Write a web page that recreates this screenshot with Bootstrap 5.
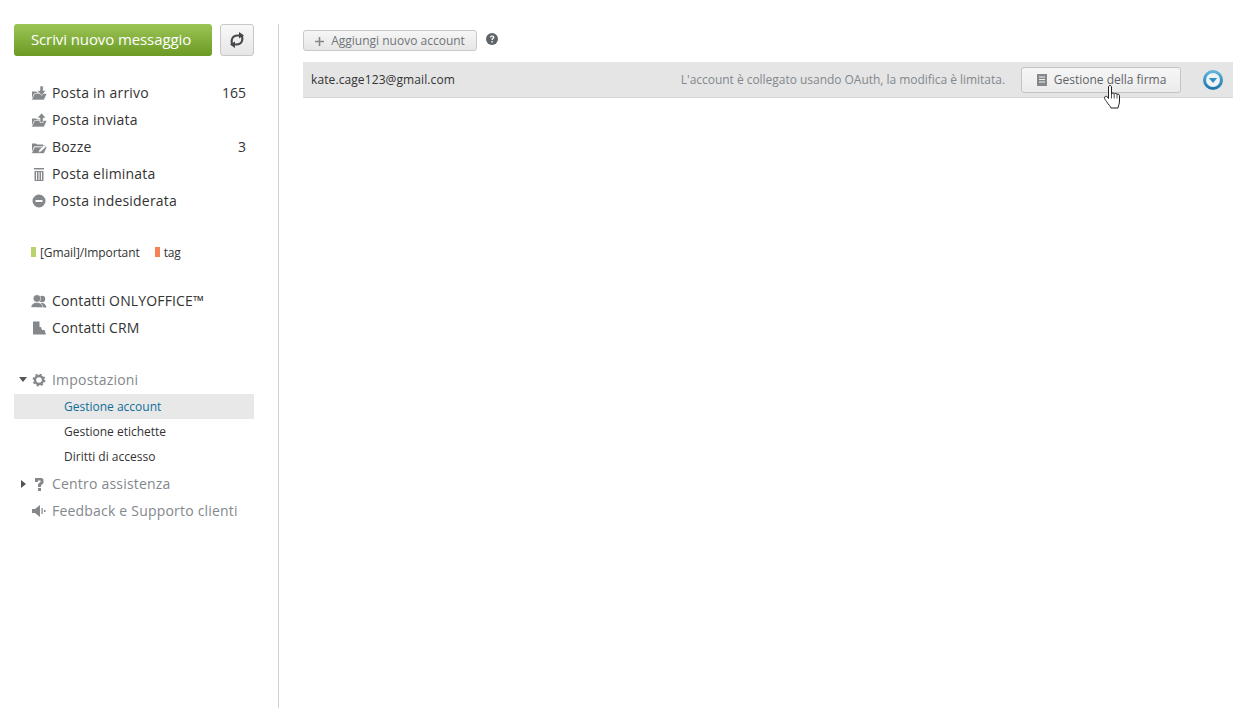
<!DOCTYPE html>
<html lang="it">
<head>
  <meta charset="UTF-8">
  <meta name="viewport" content="width=device-width, initial-scale=1.0">
  <title>Gestione account</title>
  <link href="https://cdn.jsdelivr.net/npm/bootstrap@5.3.0/dist/css/bootstrap.min.css" rel="stylesheet">
  <style>
    html, body { height: 100%; }
    body { background: #fff; font-family: "Open Sans", "Liberation Sans", sans-serif; color: #333; overflow: hidden; }
    .page-wrap { height: 708px; padding-left: 14px; padding-right: 7px; }
    .side-col { width: 240px; padding-top: 24px; flex: none; }
    .side-rule { width: 1px; background: #d1d1d1; margin-left: 24px; margin-right: 24px; margin-top: 24px; flex: none; }
    .main-col { flex: 1 1 auto; padding-top: 30px; min-width: 0; }
    .btn-compose { width: 198px; height: 32px; background: linear-gradient(#9cc557, #6b9a23); border: 0; border-radius: 3px; color: #fff; font-size: 15px; letter-spacing: -.1px; padding: 0 4px 2px 0; line-height: 30px; }
    .btn-compose:hover { color: #fff; }
    .btn-refresh { width: 34px; height: 32px; padding: 0; background: linear-gradient(#f8f8f8, #e6e6e6); border: 1px solid #c8c8c8; border-radius: 3px; }
    .menu-block { margin-top: 23px; }
    .menu-row { height: 27px; font-size: 14px; letter-spacing: .2px; color: #333; padding-left: 17px; padding-right: 8px; }
    .menu-row.is-tight { letter-spacing: .15px; }
    .menu-row svg { width: 16px; height: 14px; flex: none; margin-right: 5px; fill: #85888b; }
    .menu-row .menu-count { margin-left: auto; letter-spacing: 0; }
    .menu-row.is-muted { color: #83888d; }
    .menu-arrow { position: absolute; left: 5px; top: 11px; }
    .menu-arrow-wrap { position: relative; }
    .sub-list { margin-top: 1px; margin-bottom: 1px; }
    .sub-row { height: 25px; font-size: 12px; color: #333; padding-left: 50px; }
    .sub-row.is-on { background: #e8e8e8; color: #0f6f99; }
    .tag-row { margin-top: 25px; height: 27px; font-size: 12px; padding-left: 17px; gap: 15px; letter-spacing: -.1px; }
    .tag-mark { width: 5px; height: 10px; display: inline-block; margin-right: 4px; }
    .group-gap { margin-top: 25px; }
    .group-first { margin-top: 21px; }
    .btn-add { height: 21px; width: 174px; padding: 0; font-size: 12px; line-height: 19px; color: #6f7478; background: linear-gradient(#f6f6f6, #e6e6e6); border: 1px solid #c8c8c8; border-radius: 3px; }
    .help-dot { margin-left: 9px; margin-top: -3px; }
    .acct-row { height: 36px; margin-top: 11px; background: #e5e5e5; border-bottom: 1px solid #d6d6d6; padding-left: 8px; font-size: 12px; }
    .acct-mail { letter-spacing: .1px; }
    .acct-note { color: #83888d; margin-left: auto; margin-right: 16px; letter-spacing: -.03px; }
    .btn-sign { width: 160px; height: 26px; padding: 0 0 0 1px; font-size: 12px; color: #5f6468; background: linear-gradient(#f6f6f6, #ebebeb); border: 1px solid #c4c4c4; border-radius: 3px; position: relative; }
    .acct-menu { margin-left: 22px; margin-right: 10px; }
    .hand-cursor { position: absolute; left: 82px; top: 17px; }
  </style>
</head>
<body>
  <div class="page-wrap d-flex">
    <!-- sidebar -->
    <div class="side-col">
      <div class="d-flex gap-2">
        <button class="btn btn-compose" type="button">Scrivi nuovo messaggio</button>
        <button class="btn btn-refresh d-flex align-items-center justify-content-center" type="button">
          <svg width="16" height="16" viewBox="0 0 16 16" fill="none" stroke="#45484b" stroke-width="2">
            <path d="M4 13.500 C1 9 3 3.500 8.500 3.500 L10.500 3.500"/><path d="M12 2.500 C15 7 13 12.500 7.500 12.500 L5.500 12.500"/>
            <path d="M10 0 L15 3.500 L10 6.500Z" fill="#45484b" stroke="none"/><path d="M6 9.500 L1 12.500 L6 16Z" fill="#45484b" stroke="none"/>
          </svg>
        </button>
      </div>

      <div class="menu-block">
        <div class="menu-row d-flex align-items-center">
          <svg viewBox="0 0 16 14"><path d="M1 13V5.500h4L6 6.500h3V8H3z"/><path d="M3.500 7.500H16L13 14H.5z" stroke="#fff" stroke-width=".6"/><path d="M9 0h3.200v4.500H15L10.600 9.500 6.200 4.500H9z" stroke="#fff" stroke-width=".6"/></svg>
          <span>Posta in arrivo</span><span class="menu-count">165</span>
        </div>
        <div class="menu-row d-flex align-items-center">
          <svg viewBox="0 0 16 14"><path d="M1 13V5.500h4L6 6.500h3V8H3z"/><path d="M3.500 7.500H16L13 14H.5z" stroke="#fff" stroke-width=".6"/><path d="M9 9.500h3.200V5H15L10.600 0 6.200 5H9z" stroke="#fff" stroke-width=".6"/></svg>
          <span>Posta inviata</span>
        </div>
        <div class="menu-row d-flex align-items-center">
          <svg viewBox="0 0 16 14"><path d="M1 12.500V3.500h4L6 4.500h6V6.500H3z"/><path d="M3.500 7H16L13 13.500H.5z" stroke="#fff" stroke-width=".6"/><path d="M7.500 12.500l.6-2.500 5-5 1.800 1.800-5 5z" stroke="#85888b" stroke-width=".5" fill="#fff"/></svg>
          <span>Bozze</span><span class="menu-count">3</span>
        </div>
        <div class="menu-row d-flex align-items-center">
          <svg viewBox="0 0 16 14"><path d="M3 1h10v1.500H3z"/><path d="M3.500 4h9v10h-9zM5 5v8h1V5zM7.500 5v8h1V5zM10 5v8h1V5z" fill-rule="evenodd"/></svg>
          <span>Posta eliminata</span>
        </div>
        <div class="menu-row d-flex align-items-center">
          <svg viewBox="0 0 16 14"><path d="M8 0.500a6.500 6.500 0 1 0 0 13 6.500 6.500 0 0 0 0-13zM4.500 6h7v2h-7z" fill-rule="evenodd"/></svg>
          <span>Posta indesiderata</span>
        </div>
      </div>

      <div class="tag-row d-flex align-items-center">
        <span><span class="tag-mark" style="background:#b8d26c"></span>[Gmail]/Important</span>
        <span><span class="tag-mark" style="background:#f58353"></span>tag</span>
      </div>

      <div class="group-first">
        <div class="menu-row is-tight d-flex align-items-center">
          <svg viewBox="0 0 16 14"><circle cx="11" cy="5" r="3.200"/><path d="M7 13.500c0-3 2-4.500 4-4.500s4 1.500 4.500 4.500z"/><circle cx="6" cy="4.500" r="3.800" stroke="#fff" stroke-width=".6"/><path d="M0 13.500c0-3 2.500-5 6-5s5.500 2 6 5z" stroke="#fff" stroke-width=".6"/></svg>
          <span>Contatti ONLYOFFICE™</span>
        </div>
        <div class="menu-row is-tight d-flex align-items-center">
          <svg viewBox="0 0 16 14"><path d="M2 .5h6.500v5.500H10l1 3h2.500l1.500 4.500H2z"/></svg>
          <span>Contatti CRM</span>
        </div>
      </div>

      <div class="group-gap">
        <div class="menu-row is-muted d-flex align-items-center menu-arrow-wrap">
          <svg class="menu-arrow" style="width:8px;height:5px;margin:0" viewBox="0 0 8 5"><path d="M0 0h8L4 5z" fill="#555"/></svg>
          <svg viewBox="0 0 16 14"><g fill="none" stroke="#85888b"><circle cx="8" cy="7" r="4" stroke-width="2.400"/><circle cx="8" cy="7" r="5.600" stroke-width="1.600" stroke-dasharray="2.200 2.200"/></g></svg>
          <span>Impostazioni</span>
        </div>
        <div class="sub-list">
          <div class="sub-row is-on d-flex align-items-center">Gestione account</div>
          <div class="sub-row d-flex align-items-center">Gestione etichette</div>
          <div class="sub-row d-flex align-items-center">Diritti di accesso</div>
        </div>
        <div class="menu-row is-muted d-flex align-items-center menu-arrow-wrap">
          <svg class="menu-arrow" style="width:5px;height:8px;margin:0;left:7px;top:10px" viewBox="0 0 5 8"><path d="M0 0l5 4-5 4z" fill="#555"/></svg>
          <svg viewBox="0 0 16 14"><path d="M4 1h7l1.500 1.500V6L10 8.500V10H7V7l2.500-2V3.500H7V5H4zM7 11h3v3H7z"/></svg>
          <span>Centro assistenza</span>
        </div>
        <div class="menu-row is-muted d-flex align-items-center">
          <svg viewBox="0 0 16 14"><path d="M1 5h3l5-4v12L4 9H1z"/><path d="M10.500 4h1.200v6h-1.200zM13 6h1.500v2H13z"/></svg>
          <span>Feedback e Supporto clienti</span>
        </div>
      </div>
    </div>

    <div class="side-rule"></div>

    <!-- account list -->
    <div class="main-col">
      <div class="d-flex align-items-center">
        <button class="btn btn-add" type="button">
          <svg width="9" height="9" viewBox="0 0 9 9" class="me-1"><path d="M3.700 0h1.600v3.700H9v1.600H5.300V9H3.700V5.300H0V3.700h3.700z" fill="#85888b"/></svg>
          Aggiungi nuovo account
        </button>
        <svg class="help-dot" width="12" height="12" viewBox="0 0 12 12"><circle cx="6" cy="6" r="6" fill="#5f6468"/><path d="M3.800 4.500C3.800 3 5 2.400 6.200 2.400s2.200.8 2.200 1.900c0 1.500-1.600 1.500-1.600 2.800H5.400c0-2 1.500-2 1.500-2.800 0-.4-.3-.7-.8-.7-.6 0-.9.400-.9.900zM5.400 8h1.400v1.400H5.400z" fill="#fff"/></svg>
      </div>
      <div class="acct-row d-flex align-items-center">
        <span class="acct-mail">kate.cage123@gmail.com</span>
        <span class="acct-note">L'account è collegato usando OAuth, la modifica è limitata.</span>
        <button class="btn btn-sign" type="button">
          <svg width="10" height="12" viewBox="0 0 10 12" class="me-1"><path fill-rule="evenodd" d="M0 0h10v12H0zM2 2.500v1h6v-1zM2 5v1h6V5zM2 7.500v1h6v-1z" fill="#85888b"/></svg>
          Gestione della firma
          <svg class="hand-cursor" width="16" height="24" viewBox="0 0 16 24"><path d="M4.500 2C4.500 0 7.500 0 7.500 2V9C8 7.500 10.200 7.500 10.200 9.200C10.700 8 13 8 13 9.700C13.500 8.700 15.500 9 15.500 10.700V16C15.500 19 14.500 20 14 23H7C6.500 21 4.500 20 2.500 16.500C1.500 15 .5 14 .5 12.800C.5 11 2.500 11 3.500 12L4.500 13.500Z" fill="#fff" stroke="#222"/><path d="M7.500 9v4.500M10.200 9.200v4.300M13 9.700v3.800" stroke="#222" stroke-width=".8" fill="none"/></svg>
        </button>
        <svg class="acct-menu" width="20" height="20" viewBox="0 0 20 20"><defs><linearGradient id="ringBlue" x1="0" y1="0" x2="0" y2="1"><stop offset="0" stop-color="#5fb2dc"/><stop offset="1" stop-color="#1f78ad"/></linearGradient></defs><circle cx="10" cy="10" r="8.500" fill="#eef3f6" stroke="url(#ringBlue)" stroke-width="3"/><path d="M5.800 8h8.400L10 13z" fill="#2f8fc4"/></svg>
      </div>
    </div>
  </div>
  <script src="https://cdn.jsdelivr.net/npm/bootstrap@5.3.0/dist/js/bootstrap.bundle.min.js"></script>
</body>
</html>
